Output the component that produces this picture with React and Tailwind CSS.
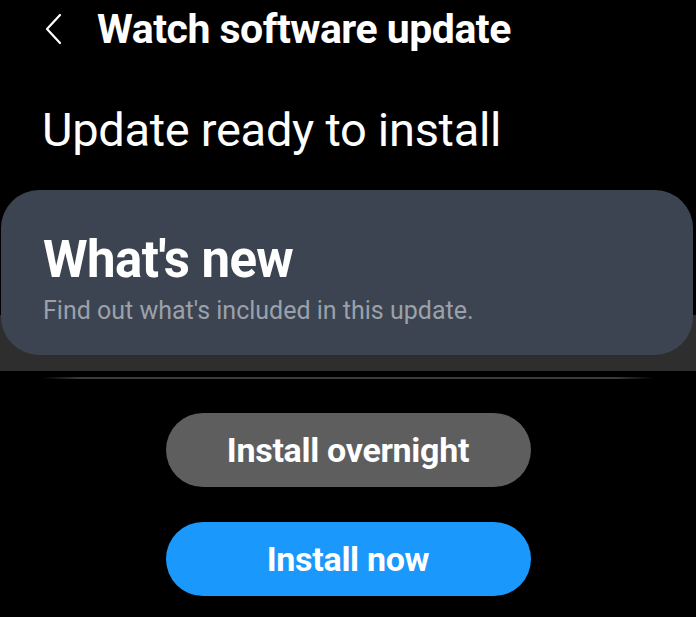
import React from "react"

function BackIcon() {
  return (
    <svg width="20" height="32" viewBox="0 0 20 32" fill="none" stroke="#ffffff" strokeWidth="2.2" strokeLinecap="round" strokeLinejoin="round">
      <polyline points="16 2 3 16 16 30" />
    </svg>
  )
}

export default function App() {
  return (
    <div className="w-[696px] h-[617px] bg-black text-white overflow-hidden" style={{ fontFamily: "Roboto, 'Noto Sans', sans-serif" }}>
      {/* header */}
      <div className="flex items-center h-[58px] pl-[44px]">
        <BackIcon />
        <h1 className="ml-[33px] text-[41px] font-bold tracking-[-0.5px] leading-none">Watch software update</h1>
      </div>

      <div className="pl-[42px] mt-[48px] text-[47px] leading-none tracking-[-0.3px]">Update ready to install</div>

      {/* card */}
      <div className="mt-[37px] bg-[linear-gradient(to_bottom,#000_0%,#000_69%,#2e2e2e_69%,#2e2e2e_100%)] pb-[16px]">
        <div className="h-[165px] rounded-[38px] bg-[#3c4451] px-[42px] pt-[44px] ml-[1px] mr-[3px]">
          <div className="text-[51px] font-bold leading-none tracking-[-0.6px]">What's new</div>
          <div className="mt-[13px] text-[25px] leading-none text-[#9ba1aa]">Find out what's included in this update.</div>
        </div>
      </div>

      <div className="mx-[42px] mt-[6px] h-[2px] bg-[linear-gradient(to_right,transparent,#3a3a3a_6%,#3a3a3a_94%,transparent)]" />

      {/* buttons */}
      <div className="flex flex-col items-center mt-[34px] gap-[35px]">
        <button className="w-[365px] h-[74px] rounded-full bg-[#5e5e5e] text-[34px] font-bold text-white tracking-[-0.3px]">Install overnight</button>
        <button className="w-[365px] h-[74px] rounded-full bg-[#1a98fb] text-[34px] font-bold text-white tracking-[-0.3px]">Install now</button>
      </div>
    </div>
  )
}
